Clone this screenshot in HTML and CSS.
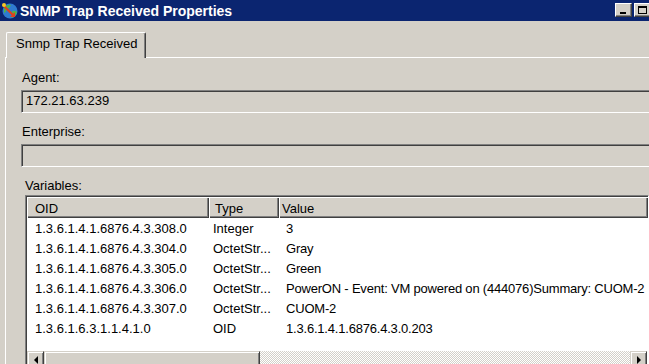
FILE: index.html
```html
<html lang="en">
<head>
    <meta charset="UTF-8">
    <meta name="viewport" content="width=device-width, initial-scale=1.0">
    <title>SNMP Trap Received Properties</title>
    <link rel="stylesheet" href="styles.css">
</head>
<body>
    <div class="window">
        <div class="titlebar">
            <svg class="app-icon" viewBox="0 0 18 18" width="18" height="18">
                <circle cx="9" cy="9" r="7.5" fill="#2f7bd0"/>
                <path d="M3 6 Q6 2 10 3 Q9 6 6 7 Q5 10 3 11 Z" fill="#4cb34a"/>
                <path d="M11 9 Q14 8 16 10 Q15 14 11 16 Q12 12 11 9 Z" fill="#4cb34a"/>
                <path d="M2 3 L12 13" stroke="#e0401c" stroke-width="2.2"/>
                <path d="M9 15 L14 15 L14 10 Z" fill="#e0401c"/>
                <circle cx="3" cy="3" r="2" fill="#f6c827"/>
            </svg>
            <span class="title">SNMP Trap Received Properties</span>
            <div class="caption-buttons">
                <div class="cap-btn"><span class="glyph-min"></span></div>
                <div class="cap-btn"><span class="glyph-max"></span></div>
            </div>
        </div>

        <div class="content">
            <div class="tab">Snmp Trap Received</div>
            <div class="panel">
                <label class="field-label">Agent:</label>
                <div class="textbox">172.21.63.239</div>

                <label class="field-label">Enterprise:</label>
                <div class="textbox"></div>

                <label class="field-label vars-label">Variables:</label>
                <div class="listview">
                    <div class="lv-header">
                        <div class="hcell col-oid">OID</div>
                        <div class="hcell col-type">Type</div>
                        <div class="hcell col-value">Value</div>
                    </div>
                    <div class="lv-body">
                        <div class="row"><span class="cell col-oid">1.3.6.1.4.1.6876.4.3.308.0</span><span class="cell col-type">Integer</span><span class="cell col-value">3</span></div>
                        <div class="row"><span class="cell col-oid">1.3.6.1.4.1.6876.4.3.304.0</span><span class="cell col-type">OctetStr...</span><span class="cell col-value">Gray</span></div>
                        <div class="row"><span class="cell col-oid">1.3.6.1.4.1.6876.4.3.305.0</span><span class="cell col-type">OctetStr...</span><span class="cell col-value">Green</span></div>
                        <div class="row"><span class="cell col-oid">1.3.6.1.4.1.6876.4.3.306.0</span><span class="cell col-type">OctetStr...</span><span class="cell col-value">PowerON - Event: VM powered on (444076)Summary: CUOM-2</span></div>
                        <div class="row"><span class="cell col-oid">1.3.6.1.4.1.6876.4.3.307.0</span><span class="cell col-type">OctetStr...</span><span class="cell col-value">CUOM-2</span></div>
                        <div class="row"><span class="cell col-oid">1.3.6.1.6.3.1.1.4.1.0</span><span class="cell col-type">OID</span><span class="cell col-value">1.3.6.1.4.1.6876.4.3.0.203</span></div>
                    </div>
                    <div class="hscroll">
                        <div class="sb-btn"><span class="arrow-left"></span></div>
                        <div class="sb-thumb"></div>
                        <div class="sb-track"></div>
                        <div class="sb-btn"><span class="arrow-right"></span></div>
                    </div>
                </div>
            </div>
        </div>
    </div>
</body>
</html>
```

FILE: styles.css
```css
body {
  margin: 0;
  width: 649px;
  height: 364px;
  overflow: hidden;
  background-color: #d4d0c8;
  font-family: "Liberation Sans", Arial, sans-serif;
  font-size: 13px;
  color: #000;
}

.window {
  width: 649px;
  height: 364px;
  overflow: hidden;
}

/* title bar */
.titlebar {
  height: 21px;
  background-color: #0b2570;
  display: flex;
  align-items: center;
  color: white;
}

.app-icon {
  margin-left: 1px;
  flex-shrink: 0;
}

.title {
  font-weight: 700;
  font-size: 14px;
  margin-left: 1px;
  white-space: nowrap;
}

.caption-buttons {
  margin-left: auto;
  margin-right: -2px;
  align-self: flex-start;
  margin-top: 3px;
  display: flex;
  gap: 2px;
}

.cap-btn {
  width: 17px;
  height: 14px;
  box-sizing: border-box;
  background-color: #d4d0c8;
  border: 1px solid;
  border-color: #fff #404040 #404040 #fff;
  box-shadow: inset -1px -1px #808080;
  display: flex;
  align-items: flex-end;
  justify-content: center;
}

.glyph-min {
  width: 6px;
  height: 2px;
  background-color: #000;
  margin-bottom: 2px;
  margin-right: 2px;
}

.glyph-max {
  width: 9px;
  height: 8px;
  box-sizing: border-box;
  border: 1px solid #000;
  border-top-width: 2px;
  margin-bottom: 2px;
  margin-right: 1px;
}

/* tab + panel */
.content {
  padding: 11px 0 0 5px;
}

.tab {
  width: 140px;
  height: 26px;
  margin-left: 1px;
  margin-bottom: -1px;
  box-sizing: border-box;
  padding-left: 9px;
  line-height: 22px;
  background-color: #d4d0c8;
  border-top: 1px solid #fff;
  border-left: 1px solid #fff;
  border-right: 1px solid #404040;
  border-radius: 2px 2px 0 0;
  box-shadow: inset -1px 0 #808080;
  position: relative;
  z-index: 1;
  white-space: nowrap;
}

.panel {
  border-top: 1px solid #fff;
  border-left: 1px solid #fff;
  padding: 12px 0 0 15px;
  height: 300px;
}

.field-label {
  display: block;
  line-height: 15px;
  margin-left: 1px;
}

.vars-label {
  margin-left: 4px;
}

.textbox {
  width: 640px;
  height: 23px;
  box-sizing: border-box;
  margin-top: 5px;
  margin-bottom: 11px;
  padding: 1px 4px 0 4px;
  line-height: 17px;
  border: 1px solid;
  border-color: #808080 #fff #fff #808080;
  box-shadow: inset 1px 1px #404040, inset -1px -1px #d4d0c8;
  white-space: nowrap;
}

/* list view */
.listview {
  margin-top: 2px;
  margin-left: 4px;
  width: 624px;
  box-sizing: border-box;
  border: 1px solid;
  border-color: #808080 #fff #fff #808080;
  box-shadow: inset 1px 1px #404040;
  padding: 1px 0 0 1px;
  background-color: white;
}

.lv-header {
  display: flex;
  height: 21px;
  background-color: #d4d0c8;
}

.hcell {
  height: 21px;
  box-sizing: border-box;
  padding-top: 2px;
  line-height: 19px;
  box-shadow: inset 1px 1px #fff, inset -1px -1px #404040, inset -2px -2px #808080;
  white-space: nowrap;
  overflow: hidden;
}

.hcell.col-oid { padding-left: 8px; }
.hcell.col-type { padding-left: 6px; }
.hcell.col-value { padding-left: 3px; }

.col-oid { width: 182px; flex-shrink: 0; }
.col-type { width: 70px; flex-shrink: 0; }
.col-value { flex: 1; min-width: 0; }

.lv-body {
  height: 133px;
  box-sizing: border-box;
  padding-top: 1px;
}

.row {
  display: flex;
  height: 20px;
  line-height: 20px;
}

.cell {
  box-sizing: border-box;
  white-space: nowrap;
  overflow: hidden;
}

.cell.col-oid { padding-left: 8px; }
.cell.col-type { padding-left: 4px; }
.cell.col-value {
  padding-left: 7px;
  letter-spacing: -0.2px;
}

/* horizontal scroll bar */
.hscroll {
  display: flex;
  height: 17px;
}

.sb-btn,
.sb-thumb {
  height: 17px;
  box-sizing: border-box;
  background-color: #d4d0c8;
  border: 1px solid;
  border-color: #d4d0c8 #404040 #404040 #d4d0c8;
  box-shadow: inset 1px 1px #fff, inset -1px -1px #808080;
}

.sb-btn {
  width: 17px;
  display: flex;
  align-items: center;
  justify-content: center;
}

.sb-thumb {
  width: 216px;
}

.sb-track {
  width: 370px;
  background: repeating-conic-gradient(#fff 0 25%, #d4d0c8 0 50%) 0 0 / 2px 2px;
}

.arrow-left {
  width: 0;
  height: 0;
  border-top: 4px solid transparent;
  border-bottom: 4px solid transparent;
  border-right: 4px solid #000;
}

.arrow-right {
  width: 0;
  height: 0;
  border-top: 4px solid transparent;
  border-bottom: 4px solid transparent;
  border-left: 4px solid #000;
}
```
